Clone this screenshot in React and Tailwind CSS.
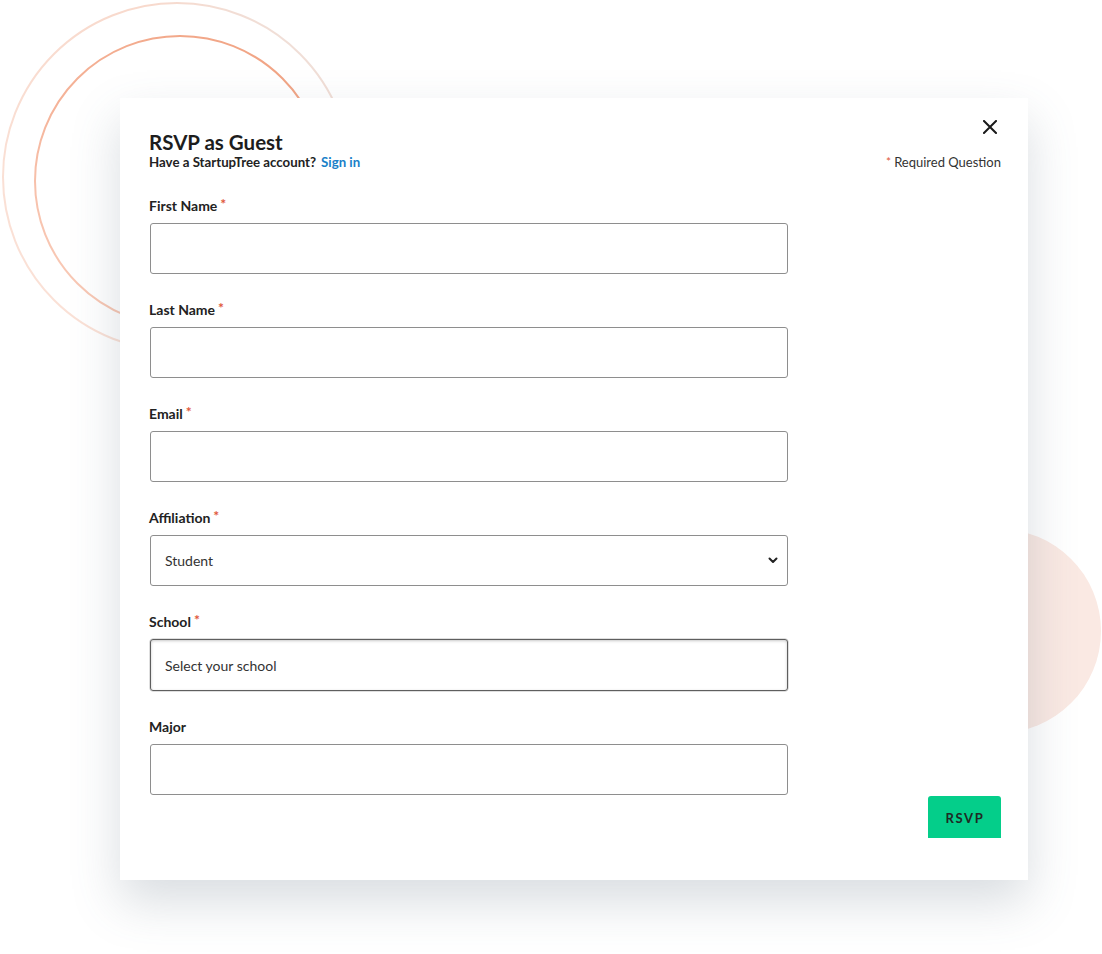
import React from "react";

const fields = [
  { label: "First Name", required: true, type: "input" },
  { label: "Last Name", required: true, type: "input" },
  { label: "Email", required: true, type: "input" },
  { label: "Affiliation", required: true, type: "select", value: "Student" },
  { label: "School", required: true, type: "school", placeholder: "Select your school" },
  { label: "Major", required: false, type: "input" },
];

const Asterisk = () => (
  <span className="relative top-[-2px] ml-[3px] text-[14px] leading-[14px] text-[#e0573a]">*</span>
);

const Field = ({ field, first }) => {
  let control;
  if (field.type === "select") {
    control = (
      <div className="ml-px flex h-[51px] w-[638px] items-center justify-between rounded-[3px] border border-[#8e8e8e] pl-[14px] pr-[9px] text-[14px] text-[#333]">
        <span>{field.value}</span>
        <svg width="10" height="7" viewBox="0 0 10 7" fill="none">
          <path d="M1.5 1.5 5 5 8.5 1.5" stroke="#222" strokeWidth="2" strokeLinecap="round" strokeLinejoin="round" />
        </svg>
      </div>
    );
  } else if (field.type === "school") {
    control = (
      <input
        placeholder={field.placeholder}
        className="ml-px h-[52px] w-[638px] rounded-[3px] border border-[#5e5e5e] pl-[14px] text-[14px] text-[#333] shadow-[inset_0_1px_3px_rgba(0,0,0,0.22),0_0_0_0.5px_rgba(0,0,0,0.25)] outline-none placeholder:text-[#333]"
      />
    );
  } else {
    control = (
      <input className="ml-px h-[51px] w-[638px] rounded-[3px] border border-[#8e8e8e] text-[14px] outline-none" />
    );
  }
  return (
    <div className={first ? "mt-[27px]" : "mt-[26px]"}>
      <div className="mb-[7px] text-[14px] font-bold leading-[20px] text-[#222]">
        {field.label}
        {field.required && <Asterisk />}
      </div>
      {control}
    </div>
  );
};

export default function App() {
  return (
    <div
      className="relative h-[954px] w-[1102px] overflow-hidden bg-white pt-[98px]"
      style={{ fontFamily: "Lato, 'Open Sans', sans-serif" }}
    >
      {/* decorative rings */}
      <svg className="absolute left-0 top-0" width="360" height="360" viewBox="0 0 360 360" fill="none">
        <defs>
          <linearGradient id="outerRing" x1="1" y1="0" x2="0" y2="1">
            <stop offset="0" stopColor="#e9e4e2" />
            <stop offset="0.3" stopColor="#f8d9cc" />
            <stop offset="1" stopColor="#fbe3d9" />
          </linearGradient>
          <linearGradient id="innerRing" x1="1" y1="0" x2="0" y2="1">
            <stop offset="0" stopColor="#f0a07f" />
            <stop offset="0.6" stopColor="#f5b49a" />
            <stop offset="1" stopColor="#fad3c3" />
          </linearGradient>
        </defs>
        <circle cx="177" cy="177" r="174" stroke="url(#outerRing)" strokeWidth="2" />
        <circle cx="180" cy="181" r="145" stroke="url(#innerRing)" strokeWidth="2" />
      </svg>
      <div className="absolute left-[897px] top-[529px] h-[204px] w-[204px] rounded-full bg-[#fae9e3]" />

      <div className="relative ml-[120px] flex h-[782px] w-[908px] flex-col bg-white pl-[29px] pr-[27px] pt-[34px] pb-[42px] shadow-[0_22px_46px_rgba(80,100,120,0.22)]">
        <button className="absolute right-[31px] top-[22px] p-0">
          <svg width="14" height="14" viewBox="0 0 14 14" fill="none">
            <path d="M1 1 13 13M13 1 1 13" stroke="#1a1a1a" strokeWidth="2" strokeLinecap="square" />
          </svg>
        </button>

        <div className="flex items-end justify-between">
          <div>
            <h1 className="mb-[2px] text-[20.5px] font-bold leading-[21px] text-[#1d1d1d]">RSVP as Guest</h1>
            <p className="text-[13.25px] font-bold leading-[14px] text-[#222]">
              Have a StartupTree account?
              <a className="ml-[5px] text-[#1a7fc8]">Sign in</a>
            </p>
          </div>
          <p className="relative top-px text-[13px] leading-[14px] text-[#333]">
            <span className="relative top-[-1px] mr-[3px] text-[12px] text-[#e0573a]">*</span>
            Required Question
          </p>
        </div>

        {fields.map((f, i) => (
          <Field key={f.label} field={f} first={i === 0} />
        ))}

        <div className="mt-px flex justify-end">
          <button className="h-[42px] w-[73px] rounded-t-[3px] bg-[#04ce8a] pl-[1px] pt-[4px] text-[13px] font-bold tracking-[1.6px] text-[#1f2a24]">
            RSVP
          </button>
        </div>
      </div>
    </div>
  );
}
